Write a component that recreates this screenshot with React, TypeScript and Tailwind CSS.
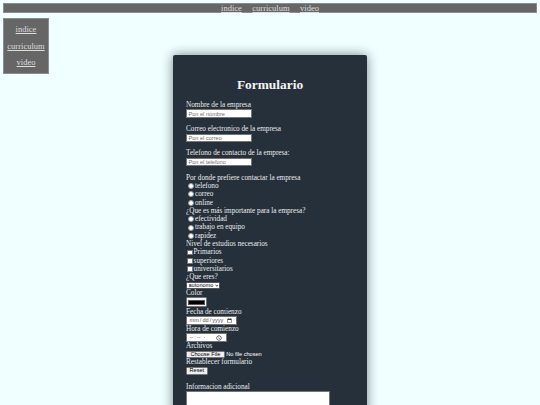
import React from "react";

const serif = { fontFamily: '"Liberation Serif", "Times New Roman", serif' };

function TextField({ label, placeholder }: { label: string; placeholder: string }) {
  return (
    <div className="mb-[7.3px]">
      <label className="block h-[8.3px] whitespace-nowrap">{label}</label>
      <input
        type="text"
        placeholder={placeholder}
        className="block mt-[0.2px] w-[66px] h-[8.5px] bg-white border border-[#767676] px-[1.5px] text-[5.6px] leading-none font-['Liberation_Sans',Arial,sans-serif] text-black placeholder:text-[#6f6f6f] outline-none"
      />
    </div>
  );
}

function Radio({ name, label }: { name: string; label: string }) {
  return (
    <label className="flex items-center h-[8.3px]">
      <input
        type="radio"
        name={name}
        className="appearance-none w-[6px] h-[6px] rounded-full bg-white border border-[#9a9a9a] ml-[1.8px] mr-[1.2px] shrink-0"
      />
      <span>{label}</span>
    </label>
  );
}

function Check({ label }: { label: string }) {
  return (
    <label className="flex items-center h-[8.3px]">
      <input
        type="checkbox"
        className="appearance-none w-[5.6px] h-[5.6px] rounded-[0.8px] bg-white border border-[#767676] ml-[1.2px] mr-[0.8px] shrink-0"
      />
      <span>{label}</span>
    </label>
  );
}

export default function App() {
  return (
    <div
      className="min-h-screen bg-[#f0ffff] p-[3px] text-[7.2px] leading-[8.3px]"
      style={serif}
    >
      <nav className="flex justify-center items-center gap-[10.5px] h-[9.7px] bg-[#666666] border border-[#8c8c8c] text-[8.5px] leading-none">
        <a href="#" className="text-[#dcdcdc] underline">indice</a>
        <a href="#" className="text-[#dcdcdc] underline">curriculum</a>
        <a href="#" className="text-[#dcdcdc] underline">video</a>
      </nav>

      <div className="grid grid-cols-[1fr_auto_1fr] items-start mt-[5.3px]">
        <aside className="w-[46px] h-[56px] bg-[#666666] border border-[#8c8c8c] flex flex-col items-center justify-center gap-[7.8px] text-[8.5px] leading-[8.5px]">
          <a href="#" className="text-[#dcdcdc] underline">indice</a>
          <a href="#" className="text-[#dcdcdc] underline">curriculum</a>
          <a href="#" className="text-[#dcdcdc] underline">video</a>
        </aside>

        <main className="mt-[37px] w-[194px] bg-[#25303b] rounded-t-[2px] shadow-[0_0_12px_rgba(20,40,45,0.55)] pt-[20.8px] px-[13px] pb-[20px] text-[#ececec]">
          <h1 className="text-center font-bold text-[13.4px] leading-[17px] mb-[8px] text-[#f4f4f4]">
            Formulario
          </h1>

          <form>
            <TextField label="Nombre de la empresa" placeholder="Pon el nombre" />
            <TextField label="Correo electronico de la empresa" placeholder="Pon el correo" />
            <TextField label="Telefono de contacto de la empresa:" placeholder="Pon el telefono" />

            <div className="whitespace-nowrap">Por donde prefiere contactar la empresa</div>
            <Radio name="contacto" label="telefono" />
            <Radio name="contacto" label="correo" />
            <Radio name="contacto" label="online" />

            <div className="whitespace-nowrap">¿Que es más importante para la empresa?</div>
            <Radio name="importante" label="efectividad" />
            <Radio name="importante" label="trabajo en equipo" />
            <Radio name="importante" label="rapidez" />

            <div>Nivel de estudios necesarios</div>
            <Check label="Primarios" />
            <Check label="superiores" />
            <Check label="universitarios" />

            <div>¿Que eres?</div>
            <div className="relative w-[34px] h-[7.2px] mt-[0.2px]">
              <select className="appearance-none block w-full h-full bg-white border border-[#555] rounded-[1.5px] pl-[1.5px] text-[5.6px] leading-none text-black font-['Liberation_Sans',Arial,sans-serif]">
                <option>autonomo</option>
                <option>empresa</option>
              </select>
              <svg
                viewBox="0 0 10 10"
                className="absolute right-[1.6px] top-[2.1px] w-[3.6px] h-[3px] pointer-events-none"
              >
                <path d="M1 2.5 L5 7.5 L9 2.5" fill="none" stroke="#000" strokeWidth="2.4" />
              </svg>
            </div>

            <div>Color</div>
            <input
              type="color"
              defaultValue="#000000"
              className="block mt-[0.2px] w-[21px] h-[10px] bg-[#f3f3f3] border border-[#767676] rounded-[1.5px] px-[1.2px] py-[1.6px] [&::-webkit-color-swatch-wrapper]:p-0 [&::-webkit-color-swatch]:border [&::-webkit-color-swatch]:border-[#555] [&::-webkit-color-swatch]:rounded-none"
            />

            <div className="mt-[0.5px]">Fecha de comienzo</div>
            <input
              type="date"
              className="block mt-[0.2px] w-[51px] h-[8.3px] bg-white border border-[#767676] px-[1.5px] text-[5.6px] leading-none text-[#555] font-['Liberation_Sans',Arial,sans-serif]"
            />

            <div>Hora de comienzo</div>
            <input
              type="time"
              className="block mt-[0.25px] w-[41px] h-[9px] bg-white border border-[#767676] px-[1.5px] text-[5.6px] leading-none text-[#555] font-['Liberation_Sans',Arial,sans-serif]"
            />

            <div>Archivos</div>
            <input
              type="file"
              className="block mt-[0.2px] h-[7.7px] text-[5.6px] leading-none text-white font-['Liberation_Sans',Arial,sans-serif] file:h-[7.7px] file:px-[3.4px] file:mr-[1.6px] file:bg-[#efefef] file:text-black file:border file:border-[#767676] file:rounded-[1.5px]"
            />

            <div>Restablecer formulario</div>
            <input
              type="reset"
              value="Reset"
              className="block mt-[0.4px] w-[21.7px] h-[8px] bg-[#efefef] border border-[#767676] rounded-[1.5px] text-[5.6px] leading-none text-black font-['Liberation_Sans',Arial,sans-serif]"
            />

            <div className="mt-[7.5px]">Informacion adicional</div>
            <textarea className="block mt-[0.2px] w-[144px] h-[40px] bg-white border border-[#767676] resize-none" />
          </form>
        </main>
        <div />
      </div>
    </div>
  );
}
